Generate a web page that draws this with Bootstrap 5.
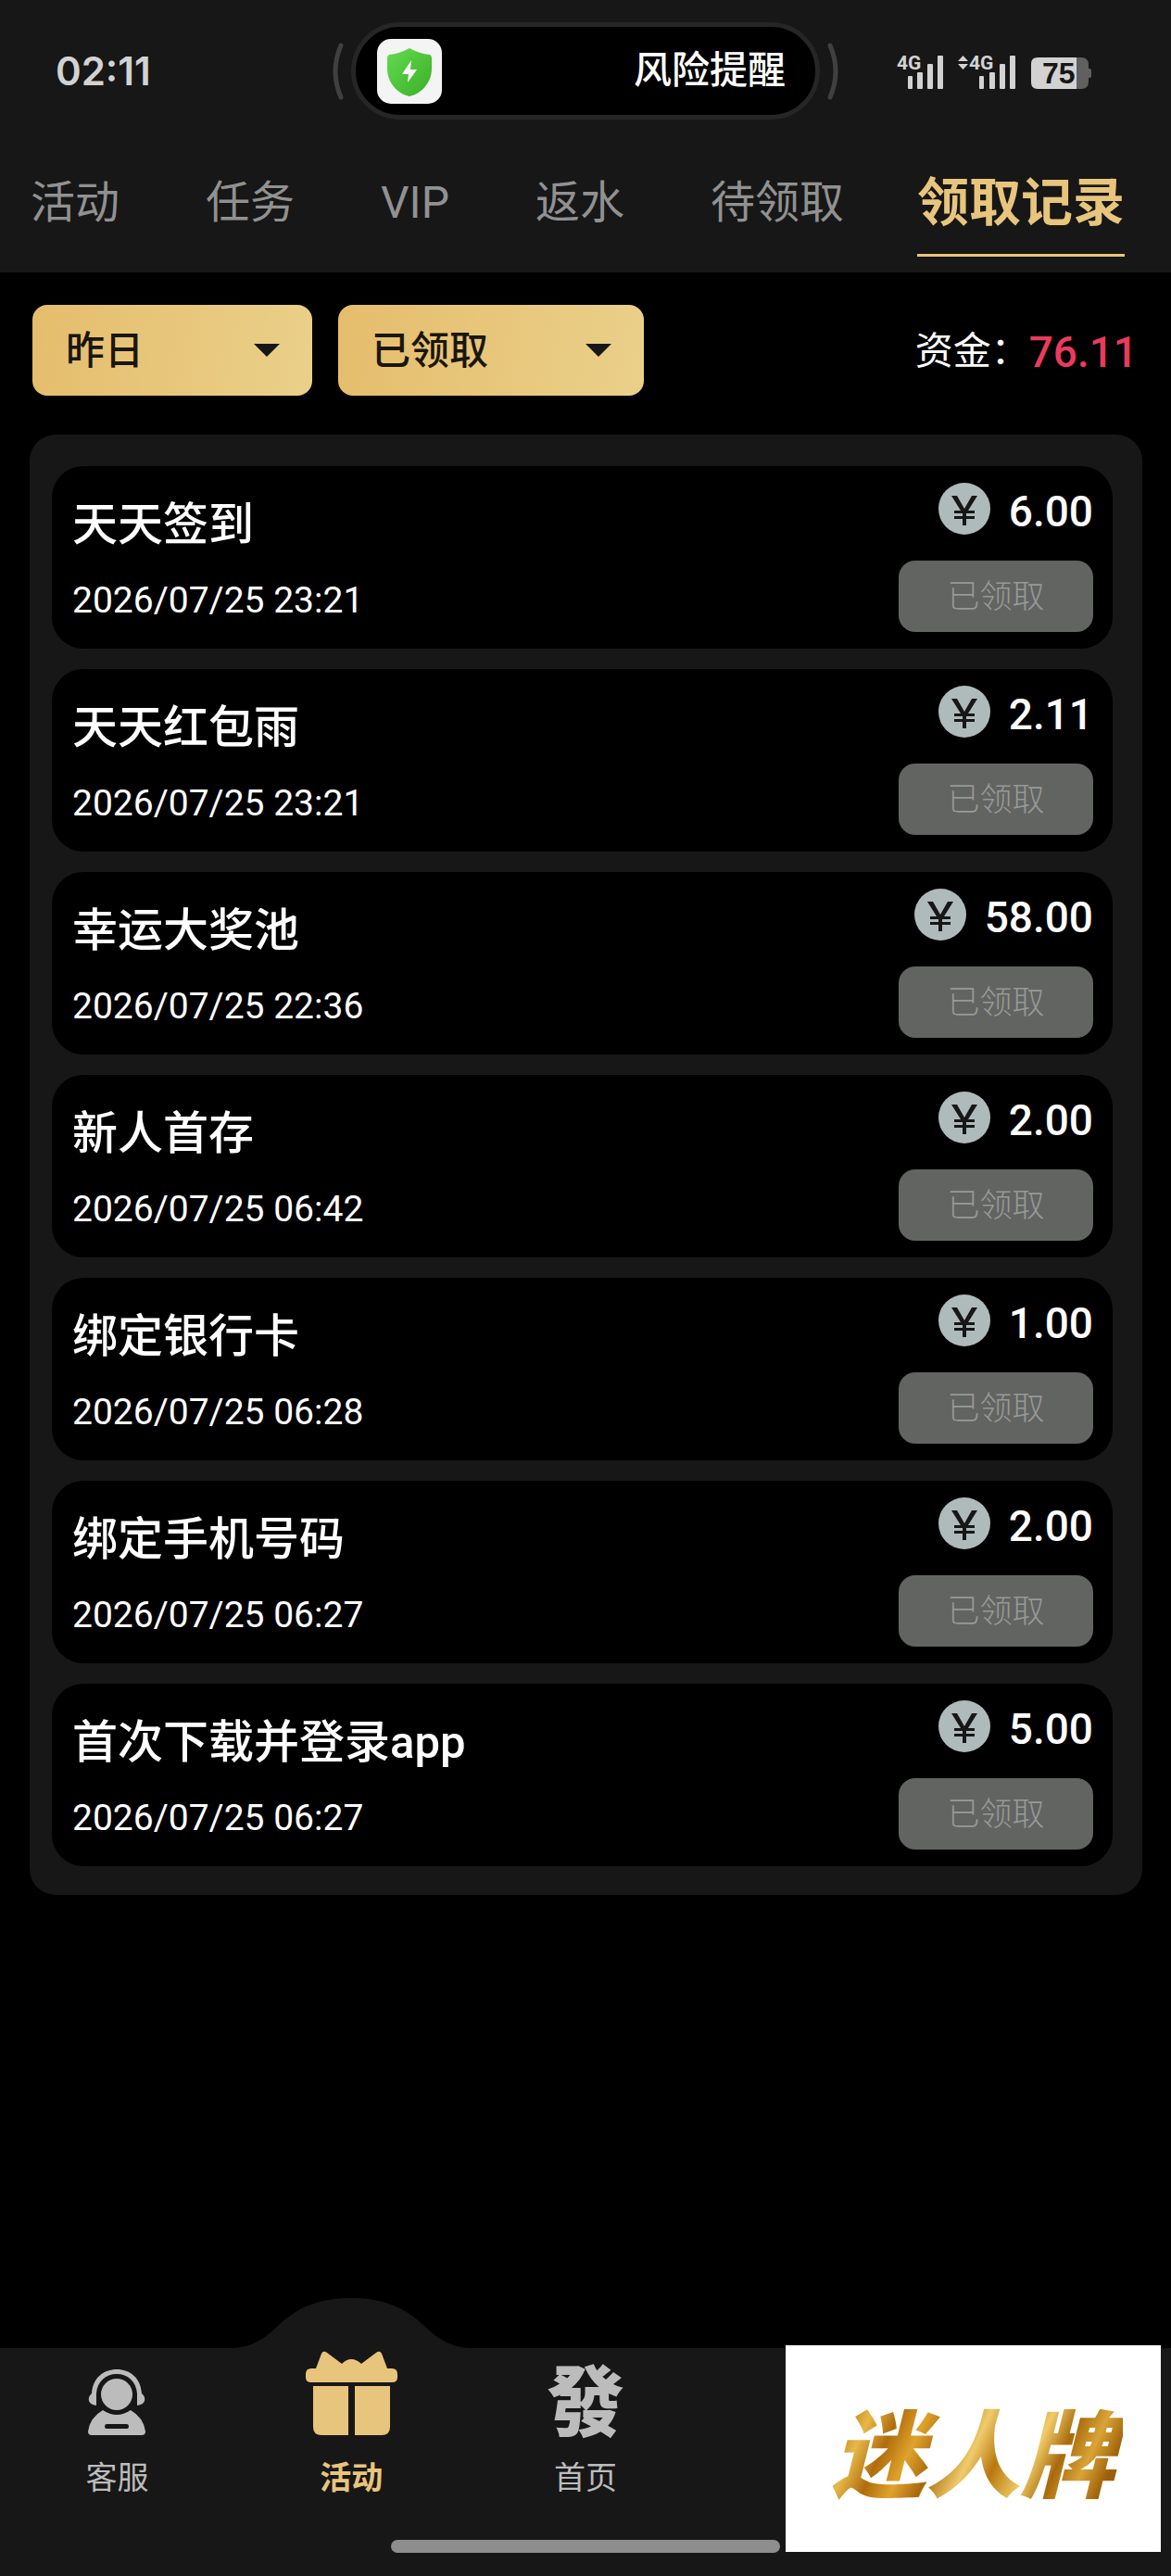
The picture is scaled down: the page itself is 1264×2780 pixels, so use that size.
<!DOCTYPE html>
<html lang="zh-CN">
<head>
  <meta charset="UTF-8" />
  <meta name="viewport" content="width=device-width, initial-scale=1" />
  <title>领取记录</title>

  <link href="https://cdn.jsdelivr.net/npm/bootstrap@5.3.0/dist/css/bootstrap.min.css" rel="stylesheet">

  <style>
    :root {
      --panel: #171717;
      --gold: #e8c57c;
      --muted: #919191;
    }
    body {
      background-color: #000;
      color: #fff;
      font-family: Roboto, "Noto Sans CJK SC", sans-serif;
    }
    .bg-panel {
      background-color: var(--panel);
    }

    /* Status bar */
    .status-bar {
      padding: 24px 86px 24px 60px;
    }
    .status-side {
      flex: 1 1 0;
    }
    .clock {
      font: 600 42px/48px Inter, sans-serif;
      color: #d2d2d2;
    }
    .island-wrap {
      gap: 8px;
      margin-left: 26px;
    }
    .island {
      width: 506px;
      height: 105px;
      padding: 0 32px 0 23px;
      background-color: #000;
      border: 5px solid #262626;
      border-radius: 53px;
      font-size: 41px;
      font-weight: 500;
    }

    /* Tabs */
    .main-tabs {
      gap: 65px;
      padding: 0 48px 17px 19px;
    }
    .main-tabs .nav-link {
      padding: 10px 14px 0;
      height: 124px;
      display: flex;
      align-items: center;
      border-bottom: 3px solid transparent;
      color: var(--muted);
      font-size: 48px;
      line-height: 60px;
      white-space: nowrap;
    }
    .main-tabs .nav-link.active {
      padding: 10px 0 0;
      color: var(--gold);
      border-color: var(--gold);
      font-size: 56px;
      font-weight: 700;
    }

    /* Filters */
    .filters {
      padding: 35px 36px 42px 35px;
      gap: 28px;
    }
    .filters .form-select {
      height: 98px;
      padding: 0 76px 0 36px;
      border: 0;
      border-radius: 16px;
      color: #1a160c;
      font-size: 42px;
      font-weight: 500;
      background: url("data:image/svg+xml,%3Csvg xmlns='http://www.w3.org/2000/svg' viewBox='0 0 28 14'%3E%3Cpath d='M0 0h28L14 14z' fill='%23171717'/%3E%3C/svg%3E") right 35px center / 28px 14px no-repeat,
        linear-gradient(100deg, #e5bd6c, #ead08a);
    }
    .select-day {
      width: 302px;
    }
    .select-state {
      width: 330px;
    }
    .fund {
      padding-top: 4px;
    }
    .fund-label {
      font-size: 41px;
    }
    .fund-value {
      font-size: 46px;
      font-weight: 500;
      color: #ea3b5c;
    }

    /* Records */
    .record-panel {
      margin: 0 31px 0 32px;
      padding: 34px 32px 31px 24px;
      border-radius: 28px;
    }
    .record-list {
      gap: 22px;
    }
    .record {
      height: 197px;
      padding: 18px 21px 18px 22px;
      background-color: #000;
      border-radius: 34px;
    }
    .record-text {
      padding: 16px 0 10px;
    }
    .record-title {
      font-size: 49px;
      line-height: 60px;
      font-weight: 500;
    }
    .record-time {
      font-size: 39px;
      line-height: 48px;
    }
    .record-amount {
      gap: 20px;
      font-size: 46px;
      line-height: 56px;
      font-weight: 500;
    }
    .record-amount span {
      padding-top: 6px;
      line-height: 50px;
    }
    .btn-claimed,
    .btn-claimed:disabled {
      width: 210px;
      height: 77px;
      padding: 4px 0 0;
      border: 0;
      border-radius: 18px;
      background-color: #626462;
      color: #979997;
      font-size: 35px;
      font-weight: 300;
      opacity: 1;
    }

    /* Bottom bar */
    .tab-bar {
      padding-bottom: 25px;
    }
    .tab-item {
      width: 20%;
      color: #bcbcbc;
      font-size: 34px;
      line-height: 40px;
      text-decoration: none;
    }
    .tab-item.active {
      color: var(--gold);
      font-weight: 700;
    }
    .tab-icon {
      height: 95px;
      margin-bottom: 25px;
    }
    .tab-item svg {
      z-index: 1;
    }
    .tab-bump {
      top: -54px;
      left: 50%;
      margin-left: -129px;
    }
    .fa-mark {
      font: 900 84px/84px "Noto Sans CJK TC", sans-serif;
    }
    .home-line {
      width: 420px;
      height: 14px;
      margin-top: 47px;
      border-radius: 7px;
      background-color: #8e8e8e;
    }
    .promo {
      right: 11px;
      top: -3px;
      width: 405px;
      height: 223px;
      z-index: 2;
      background-color: #fff;
      text-decoration: none;
    }
    .promo-name {
      padding: 0 8px;
      font: italic 900 102px/120px "Noto Sans CJK SC", sans-serif;
      color: transparent;
      background: linear-gradient(115deg, #b9780f 8%, #e6b84a 16%, #b06c0c 24%, #e0a32c 32%, #a8690c 40%, #efcb6c 50%, #b9780f 58%, #f0cc68 68%, #a8690c 76%, #d9a437 84%, #9c5e08 92%);
      -webkit-background-clip: text;
      background-clip: text;
    }
  </style>
</head>
<body class="d-flex flex-column min-vh-100">

  <header class="bg-panel">
    <div class="status-bar d-flex align-items-center">
      <div class="status-side clock">02:11</div>

      <div class="island-wrap d-flex align-items-center">
        <svg width="12" height="62" viewBox="0 0 12 62" fill="none" stroke="#404040" stroke-width="5" stroke-linecap="round" aria-hidden="true"><path d="M9 3Q-3 31 9 59"/></svg>
        <div class="island d-flex align-items-center justify-content-between">
          <svg width="70" height="70" viewBox="0 0 70 70" aria-hidden="true">
            <defs>
              <linearGradient id="shieldFill" x1="0" y1="0" x2="1" y2="1">
                <stop offset="0" stop-color="#62dc50"/>
                <stop offset="1" stop-color="#3cad27"/>
              </linearGradient>
            </defs>
            <rect width="70" height="70" rx="15" fill="#f4f4f4"/>
            <path d="M35 10Q46 16 57 17Q59 18 59 21V32C59 47 48 59 35 62C22 59 11 47 11 32V21Q11 18 13 17Q24 16 35 10Z" fill="url(#shieldFill)"/>
            <path d="M37 23L27 38H34L33 47L43 33H36Z" fill="#fff"/>
          </svg>
          <span>风险提醒</span>
        </div>
        <svg width="12" height="62" viewBox="0 0 12 62" fill="none" stroke="#404040" stroke-width="5" stroke-linecap="round" aria-hidden="true"><path d="M3 3Q15 31 3 59"/></svg>
      </div>

      <div class="status-side d-flex justify-content-end">
        <svg width="210" height="40" viewBox="0 0 210 40" fill="#d2d2d2" font-family="Roboto, sans-serif" font-weight="700">
          <text x="0" y="18" font-size="21">4G</text>
          <rect x="12" y="25" width="5" height="14" rx="1"/>
          <rect x="22" y="21" width="6" height="18" rx="1"/>
          <rect x="33" y="12" width="6" height="27" rx="1"/>
          <rect x="44" y="3" width="6" height="36" rx="1"/>
          <path d="M66 9L71.500 3L77 9ZM66 12H77L71.500 18Z"/>
          <text x="78" y="18" font-size="21">4G</text>
          <rect x="89" y="25" width="5" height="14" rx="1"/>
          <rect x="100" y="21" width="6" height="18" rx="1"/>
          <rect x="111" y="12" width="6" height="27" rx="1"/>
          <rect x="122" y="3" width="6" height="36" rx="1"/>
          <path d="M194 5H199Q207 5 207 13V17H208Q210 17 210 19V25Q210 27 208 27H207V31Q207 39 199 39H194Z" fill="#606060"/>
          <path d="M194 5V39H152Q145 39 145 32V12Q145 5 152 5Z"/>
          <text x="157" y="33" font-size="32" font-family="Liberation Sans, sans-serif" fill="#171717">75</text>
        </svg>
      </div>
    </div>

    <nav class="nav main-tabs flex-nowrap" aria-label="活动中心">
      <a class="nav-link" href="#">活动</a>
      <a class="nav-link" href="#">任务</a>
      <a class="nav-link" href="#">VIP</a>
      <a class="nav-link" href="#">返水</a>
      <a class="nav-link" href="#">待领取</a>
      <a class="nav-link active" href="#" aria-current="page">领取记录</a>
    </nav>
  </header>

  <main>
    <form class="filters d-flex align-items-center">
      <select class="form-select select-day" aria-label="日期">
        <option selected>昨日</option>
      </select>
      <select class="form-select select-state" aria-label="状态">
        <option selected>已领取</option>
      </select>
      <div class="fund ms-auto d-flex align-items-center text-nowrap">
        <span class="fund-label">资金：</span>
        <span class="fund-value">76.11</span>
      </div>
    </form>

    <section class="record-panel bg-panel">
      <ul class="record-list list-unstyled d-flex flex-column mb-0" id="records"></ul>
    </section>
  </main>

  <footer class="tab-bar bg-panel position-relative mt-auto">
    <nav class="d-flex" aria-label="底部导航">
      <a class="tab-item d-flex flex-column align-items-center" href="#">
        <span class="tab-icon d-flex align-items-end">
          <svg width="62" height="72" viewBox="0 0 62 72" fill="currentColor" aria-hidden="true">
            <path d="M4 26C5 9 17 0 31 0S57 9 58 26Q62 29 61 34Q60 38 53 39V26C52 13 43 5 31 5S10 13 9 26V39Q2 38 1 34Q0 29 4 26Z"/>
            <circle cx="31" cy="27" r="17"/>
            <path fill-rule="evenodd" d="M16 44Q31 54 46 44Q60 52 62 67Q62 71 58 71H4Q0 71 0 67Q2 52 16 44ZM20 59Q18 59 18 61.500T20 64H42Q44 64 44 61.500T42 59Z"/>
          </svg>
        </span>
        <span>客服</span>
      </a>
      <a class="tab-item active position-relative d-flex flex-column align-items-center" href="#" aria-current="page">
        <svg class="tab-bump position-absolute" width="258" height="55" viewBox="0 0 258 55" fill="#171717" aria-hidden="true"><path d="M0 55V54C20 54 36 44 50 30C72 9 96 0 129 0S186 9 208 30C222 44 238 54 258 54V55Z"/></svg>
        <span class="tab-icon d-flex align-items-end">
          <svg width="99" height="92" viewBox="0 0 99 92" fill="currentColor" aria-hidden="true">
            <path d="M11 19L17 3Q19 -1 23 2L39 14Q49 4 60 14L76 2Q80 -1 82 3L88 19H93Q99 19 99 25V29Q99 34 93 34H6Q0 34 0 29V25Q0 19 6 19Z"/>
            <path d="M8 38H46V91H17Q8 91 8 82ZM53 38H91V82Q91 91 82 91H53Z"/>
          </svg>
        </span>
        <span>活动</span>
      </a>
      <a class="tab-item d-flex flex-column align-items-center" href="#">
        <span class="tab-icon d-flex align-items-end"><span class="fa-mark" aria-hidden="true">發</span></span>
        <span>首页</span>
      </a>
    </nav>
    <div class="home-line mx-auto"></div>

    <a class="promo position-absolute d-flex align-items-center justify-content-center" href="#">
      <span class="promo-name">迷人牌</span>
    </a>
  </footer>

  <script src="https://cdn.jsdelivr.net/npm/bootstrap@5.3.0/dist/js/bootstrap.bundle.min.js"></script>

  <script>
    const records = [
      { title: "天天签到", time: "2026/07/25 23:21", amount: "6.00" },
      { title: "天天红包雨", time: "2026/07/25 23:21", amount: "2.11" },
      { title: "幸运大奖池", time: "2026/07/25 22:36", amount: "58.00" },
      { title: "新人首存", time: "2026/07/25 06:42", amount: "2.00" },
      { title: "绑定银行卡", time: "2026/07/25 06:28", amount: "1.00" },
      { title: "绑定手机号码", time: "2026/07/25 06:27", amount: "2.00" },
      { title: "首次下载并登录app", time: "2026/07/25 06:27", amount: "5.00" }
    ];

    const list = document.getElementById("records");

    records.forEach(item => {
      const li = document.createElement("li");
      li.className = "record d-flex justify-content-between";

      li.innerHTML = `
        <div class="record-text d-flex flex-column justify-content-between">
          <div class="record-title">${item.title}</div>
          <time class="record-time">${item.time}</time>
        </div>
        <div class="d-flex flex-column justify-content-between align-items-end">
          <div class="record-amount d-flex align-items-center">
            <svg width="56" height="56" viewBox="0 0 56 56" aria-hidden="true">
              <circle cx="28" cy="28" r="28" fill="#afbaba"/>
              <path d="M14 14H20L28 28L36 14H42L32 30H39V33H30V36H39V39H30V46H26V39H17V36H26V33H17V30H24Z" fill="#171717"/>
            </svg>
            <span>${item.amount}</span>
          </div>
          <button type="button" class="btn btn-claimed" disabled>已领取</button>
        </div>
      `;
      list.appendChild(li);
    });
  </script>

</body>
</html>
